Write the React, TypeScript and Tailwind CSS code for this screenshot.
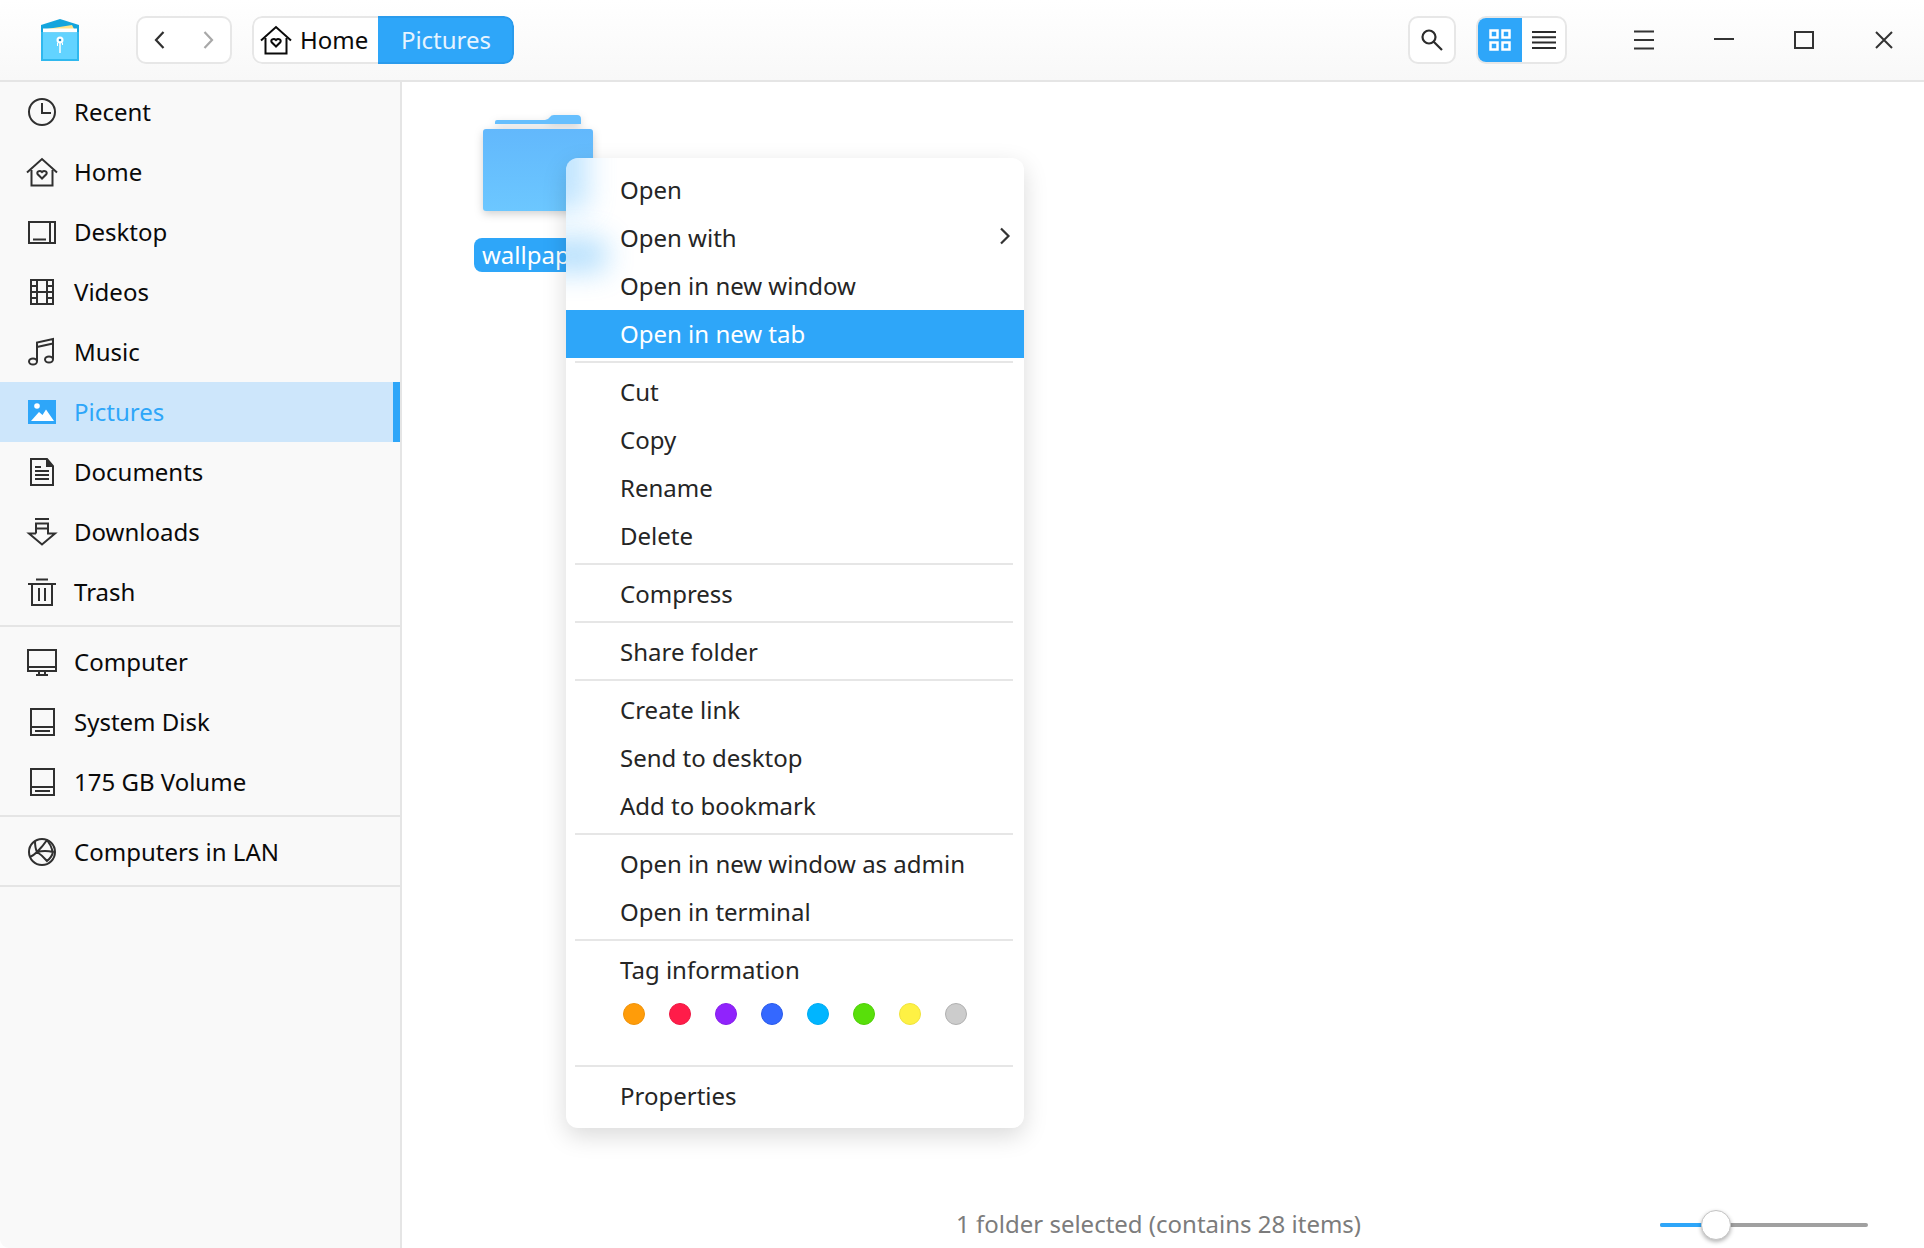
import type { ReactNode } from 'react';

const FONT = "font-['Noto_Sans','Liberation_Sans',sans-serif]";

const Ico = ({ children, className = '' }: { children: ReactNode; className?: string }) => (
  <svg width="32" height="32" viewBox="0 0 32 32" fill="none" stroke="currentColor" strokeWidth="2" className={`shrink-0 ${className}`}>
    {children}
  </svg>
);

const HomeIcon = () => (
  <Ico>
    <path d="M1 16.500 16 3l15 13.500" />
    <path d="M5.500 14v15.500h21V14" />
    <path d="M16 22.500l-4.300-4.200c-1.700-2.300 2-4.700 4.300-2.200 2.300-2.500 6-0.100 4.300 2.200z" />
  </Ico>
);

const SIDEBAR_A: { label: string; icon: ReactNode; active?: boolean }[] = [
  { label: 'Recent', icon: <Ico><circle cx="16" cy="16" r="13" /><path d="M16 7v10h9" /></Ico> },
  { label: 'Home', icon: <HomeIcon /> },
  { label: 'Desktop', icon: <Ico><rect x="3" y="6" width="26" height="21" /><path d="M24 6v21M7 23.500h13" /></Ico> },
  { label: 'Videos', icon: <Ico><rect x="5" y="4" width="22" height="24" /><path d="M11 4v24M21 4v24M5 10h6M5 16h22M5 22h6M21 10h6M21 22h6" /></Ico> },
  { label: 'Music', icon: <Ico><path d="M11 25V6.500L27 3v20" /><path d="M11 11l16-3.500" /><ellipse cx="7" cy="25.500" rx="4" ry="3" /><ellipse cx="23" cy="23.500" rx="4" ry="3" /></Ico> },
  {
    label: 'Pictures',
    active: true,
    icon: (
      <svg width="32" height="32" viewBox="0 0 32 32" className="shrink-0">
        <rect x="2" y="4" width="28" height="24" fill="#2ea6f9" />
        <circle cx="11" cy="10" r="2.800" fill="#fff" />
        <path d="M5 25l8-9 3.500 3 3.500-5.500 8 11.500z" fill="#fff" />
      </svg>
    ),
  },
  { label: 'Documents', icon: <Ico><path d="M5 3h16l6 7v19H5z" /><path d="M21 3v7h6" fill="currentColor" /><path d="M9 15h14M9 19h14M9 23h14M9 11h6" /></Ico> },
  { label: 'Downloads', icon: <Ico><path d="M9 3h14M10 7.500h12v5H10z" /><path d="M10 17.500H3l13 11 13-11h-7v-5" /><path d="M10 12.500v5" /></Ico> },
  { label: 'Trash', icon: <Ico><path d="M10 3.500h12M2 8h28M6 8v21h20V8M13 12v13M19 12v13" /></Ico> },
];

const DISK = <Ico><rect x="5" y="3" width="23" height="26" /><path d="M5 21h23M9 25h15" /></Ico>;

const SIDEBAR_B: { label: string; icon: ReactNode }[] = [
  { label: 'Computer', icon: <Ico><rect x="2" y="4" width="28" height="21" /><path d="M2 21h28M10 29h12M13 25v4M19 25v4" /></Ico> },
  { label: 'System Disk', icon: DISK },
  { label: '175 GB Volume', icon: DISK },
];

const MENU: string[][] = [
  ['Open', 'Open with', 'Open in new window', 'Open in new tab'],
  ['Cut', 'Copy', 'Rename', 'Delete'],
  ['Compress'],
  ['Share folder'],
  ['Create link', 'Send to desktop', 'Add to bookmark'],
  ['Open in new window as admin', 'Open in terminal'],
];

const TAGS = [
  'bg-[#ff9c09] border-[#f0930a]',
  'bg-[#ff1c49] border-[#ee1a44]',
  'bg-[#9023fc] border-[#8620ea]',
  'bg-[#3468ff] border-[#2a5bea]',
  'bg-[#00b5ff] border-[#00acf2]',
  'bg-[#58df0a] border-[#50d008]',
  'bg-[#fef144] border-[#f0e43c]',
  'bg-[#cccccc] border-[#b0b0b0]',
];

function SideRow({ label, icon, active }: { label: string; icon: ReactNode; active?: boolean }) {
  return (
    <div className={`relative flex h-[60px] items-center gap-[16px] pl-[26px] ${active ? 'bg-[#cde6fb] text-[#2ea6f9]' : 'text-[#303030]'}`}>
      {icon}
      <span className={active ? 'text-[#2ea6f9]' : 'text-[#0a0a0a]'}>{label}</span>
      {active && <div className="absolute right-0 top-0 h-full w-[7px] bg-[#2ea6f9]" />}
    </div>
  );
}

const Sep = () => (
  <div className="h-[10px] pl-[9px] pr-[11px] pt-[3px]">
    <div className="h-[2px] w-full bg-[#e6e6e6]" />
  </div>
);

function MenuRow({ label }: { label: string }) {
  const hot = label === 'Open in new tab';
  return (
    <div className={`relative flex h-[48px] items-center pl-[54px] ${hot ? 'bg-[#2ea6f9] text-white' : 'text-[#252525]'}`}>
      {label}
      {label === 'Open with' && (
        <svg width="12" height="18" viewBox="0 0 12 18" fill="none" stroke="#333" strokeWidth="2.200" className="absolute right-[13px] top-[13px]">
          <path d="M2 1.500 9.500 9 2 16.500" />
        </svg>
      )}
    </div>
  );
}

export default function App() {
  return (
    <div className={`${FONT} flex h-[1248px] w-[1924px] flex-col overflow-hidden rounded-[9px] bg-white text-[24px] leading-[32px]`}>
      <header className="flex h-[82px] shrink-0 items-center border-b-2 border-[#e5e5e5] bg-gradient-to-b from-white to-[#f8f8f8] pl-[41px]">
        <svg width="38" height="42" viewBox="0 0 38 42" className="mt-[-1px] shrink-0">
          <path d="M0 6 19 0l19 6v14H0z" fill="#14a5dd" />
          <path d="M6 10 31 6l2 4z" fill="#ffe48a" />
          <rect x="2" y="9.500" width="34" height="4" fill="#fff" />
          <rect x="0" y="13" width="2" height="29" fill="#2fb8ee" />
          <rect x="36" y="13" width="2" height="29" fill="#2fb8ee" />
          <rect x="2" y="13.500" width="34" height="27" fill="#62d3ff" />
          <rect x="0" y="40" width="38" height="2" fill="#2fb8ee" />
          <path d="M19 21v13" stroke="#fff" strokeWidth="1.500" />
          <path d="M16.500 24v3M21.500 24v2" stroke="#fff" strokeWidth="1" />
          <circle cx="19" cy="21" r="3.500" fill="#fff" />
          <circle cx="19" cy="21" r="1.300" fill="#2a8fc4" />
        </svg>

        <div className="ml-[57px] flex h-[48px] w-[96px] items-center justify-between rounded-[10px] border-2 border-[#e7e7e7] bg-white px-[15px]">
          <svg width="14" height="20" viewBox="0 0 14 20" fill="none" stroke="#303030" strokeWidth="2.200"><path d="M10.500 2 3 10l7.500 8" /></svg>
          <svg width="14" height="20" viewBox="0 0 14 20" fill="none" stroke="#a8a8a8" strokeWidth="2.200"><path d="m3.500 2 7.500 8-7.500 8" /></svg>
        </div>

        <div className="ml-[20px] flex h-[48px] w-[262px] overflow-hidden rounded-[10px]">
          <div className="flex w-[126px] items-center gap-[8px] rounded-l-[10px] border-2 border-r-0 border-[#e7e7e7] bg-white pl-[6px] text-[#0a0a0a]">
            <HomeIcon />
            Home
          </div>
          <div className="flex flex-1 items-center justify-center rounded-r-[10px] border-2 border-l-0 border-[#2a9bec] bg-[#2ea6f9] pl-[2px] text-[#e6f4ff]">Pictures</div>
        </div>

        <div className="ml-auto flex h-[48px] w-[48px] items-center justify-center rounded-[10px] border-2 border-[#e7e7e7] bg-white">
          <svg width="22" height="22" viewBox="0 0 22 22" fill="none" stroke="#2c2c2c" strokeWidth="2.200"><circle cx="8" cy="8" r="6.500" /><path d="m12.500 12.500 8.500 8.500" /></svg>
        </div>

        <div className="ml-[20px] flex h-[48px] w-[91px] overflow-hidden rounded-[10px] border-2 border-[#e7e7e7] bg-white">
          <div className="flex w-[44px] items-center justify-center bg-[#2ea6f9]">
            <svg width="22" height="22" viewBox="0 0 22 22" fill="none" stroke="#fff" strokeWidth="2.500"><rect x="1.500" y="1.500" width="7" height="7" /><rect x="13.500" y="1.500" width="7" height="7" /><rect x="1.500" y="13.500" width="7" height="7" /><rect x="13.500" y="13.500" width="7" height="7" /></svg>
          </div>
          <div className="flex flex-1 items-center justify-center">
            <svg width="24" height="20" viewBox="0 0 24 20" stroke="#2c2c2c" strokeWidth="2"><path d="M0 2h24M0 7.300h24M0 12.600h24M0 18h24" /></svg>
          </div>
        </div>

        <div className="ml-[37px] flex">
          <div className="flex h-[80px] w-[80px] items-center justify-center">
            <svg width="20" height="20" viewBox="0 0 20 20" stroke="#333" strokeWidth="2"><path d="M0 1.500h20M0 10h20M0 18.500h20" /></svg>
          </div>
          <div className="flex h-[80px] w-[80px] items-center justify-center">
            <svg width="20" height="4" viewBox="0 0 20 4" stroke="#333" strokeWidth="2"><path d="M0 1h20" /></svg>
          </div>
          <div className="flex h-[80px] w-[80px] items-center justify-center">
            <svg width="20" height="18" viewBox="0 0 20 18" fill="none" stroke="#333" strokeWidth="2"><rect x="1" y="1" width="18" height="16" /></svg>
          </div>
          <div className="flex h-[80px] w-[80px] items-center justify-center">
            <svg width="18" height="18" viewBox="0 0 18 18" stroke="#333" strokeWidth="2"><path d="m1 1 16 16M17 1 1 17" /></svg>
          </div>
        </div>
      </header>

      <div className="flex min-h-0 flex-1">
        <aside className="w-[402px] shrink-0 border-r-2 border-[#e5e5e5] bg-[#f9f9f9]">
          {SIDEBAR_A.map(r => <SideRow key={r.label} {...r} />)}
          <div className="mb-[5px] mt-[3px] h-[2px] bg-[#e5e5e5]" />
          {SIDEBAR_B.map(r => <SideRow key={r.label} {...r} />)}
          <div className="mb-[5px] mt-[3px] h-[2px] bg-[#e5e5e5]" />
          <SideRow
            label="Computers in LAN"
            icon={<Ico><circle cx="16" cy="16" r="13" /><path d="M9 5q0 7 2 11 5 3 10 9 5-4 6-9-8-2-16 0M21 4q-4 6-10 12-3 3-7 5M21 4q4 5 6 12" /></Ico>}
          />
          <div className="mt-[3px] h-[2px] bg-[#e5e5e5]" />
        </aside>

        <main className="relative flex min-w-0 flex-1 flex-col bg-white">
          <div className="flex-1 pl-[72px] pt-[33px]">
            <div className="flex w-[140px] flex-col items-start">
              <svg width="110" height="96" viewBox="0 0 110 96" className="ml-[9px] drop-shadow-[0_3px_4px_rgba(0,0,0,0.18)]">
                <defs>
                  <linearGradient id="folderBody" x1="0" y1="0" x2="0" y2="1">
                    <stop offset="0" stopColor="#62b8fc" />
                    <stop offset="1" stopColor="#6cc7ff" />
                  </linearGradient>
                </defs>
                <path d="M12 9V7q0-2 2-2h48q3 0 5-3 1-2 4-2h23q4 0 4 4v5z" fill="#66bffe" />
                <rect x="0" y="14" width="110" height="82" rx="3" fill="url(#folderBody)" />
              </svg>
              <div className="mt-[27px] flex h-[34px] items-center rounded-[8px] bg-[#2ea6f9] px-[8px] text-white">wallpapers</div>
            </div>
          </div>
          <footer className="relative flex h-[50px] shrink-0 items-center pt-[1px] text-[#7c7c7c]">
            <span className="ml-[554px]">1 folder selected (contains 28 items)</span>
            <div className="absolute left-[1258px] top-[25px] flex h-[4px] w-[208px] rounded-full bg-[#a0a0a0]">
              <div className="h-full w-[56px] rounded-l-full bg-[#2ea6f9]" />
            </div>
            <div className="absolute left-[1299px] top-[12px] h-[30px] w-[30px] rounded-full border border-[#c4c4c4] bg-white shadow-[0_2px_4px_rgba(0,0,0,0.3)]" />
          </footer>

          <div className="absolute left-[164px] top-[76px] w-[458px] rounded-[12px] bg-white shadow-[0_8px_24px_rgba(0,0,0,0.15)]">
            {/* glow of the folder and its label behind the frosted menu */}
            <div className="absolute inset-0 overflow-hidden rounded-[12px]">
              <div className="absolute left-[-30px] top-[-30px] h-[82px] w-[52px] bg-[#66bffe] opacity-40 blur-[14px]" />
              <div className="absolute left-[-30px] top-[80px] h-[34px] w-[70px] bg-[#2ea6f9] opacity-35 blur-[14px]" />
            </div>
            <div className="relative py-[8px]">
              {MENU.map((group, i) => (
                <div key={i}>
                  {i > 0 && <Sep />}
                  {group.map(l => <MenuRow key={l} label={l} />)}
                </div>
              ))}
              <Sep />
              <div className="flex h-[48px] items-center pl-[54px] text-[#252525]">Tag information</div>
              <div className="flex h-[68px] items-start gap-[24px] pl-[57px] pt-[9px]">
                {TAGS.map(t => <div key={t} className={`h-[22px] w-[22px] rounded-full border ${t}`} />)}
              </div>
              <Sep />
              <MenuRow label="Properties" />
            </div>
          </div>
        </main>
      </div>
    </div>
  );
}
